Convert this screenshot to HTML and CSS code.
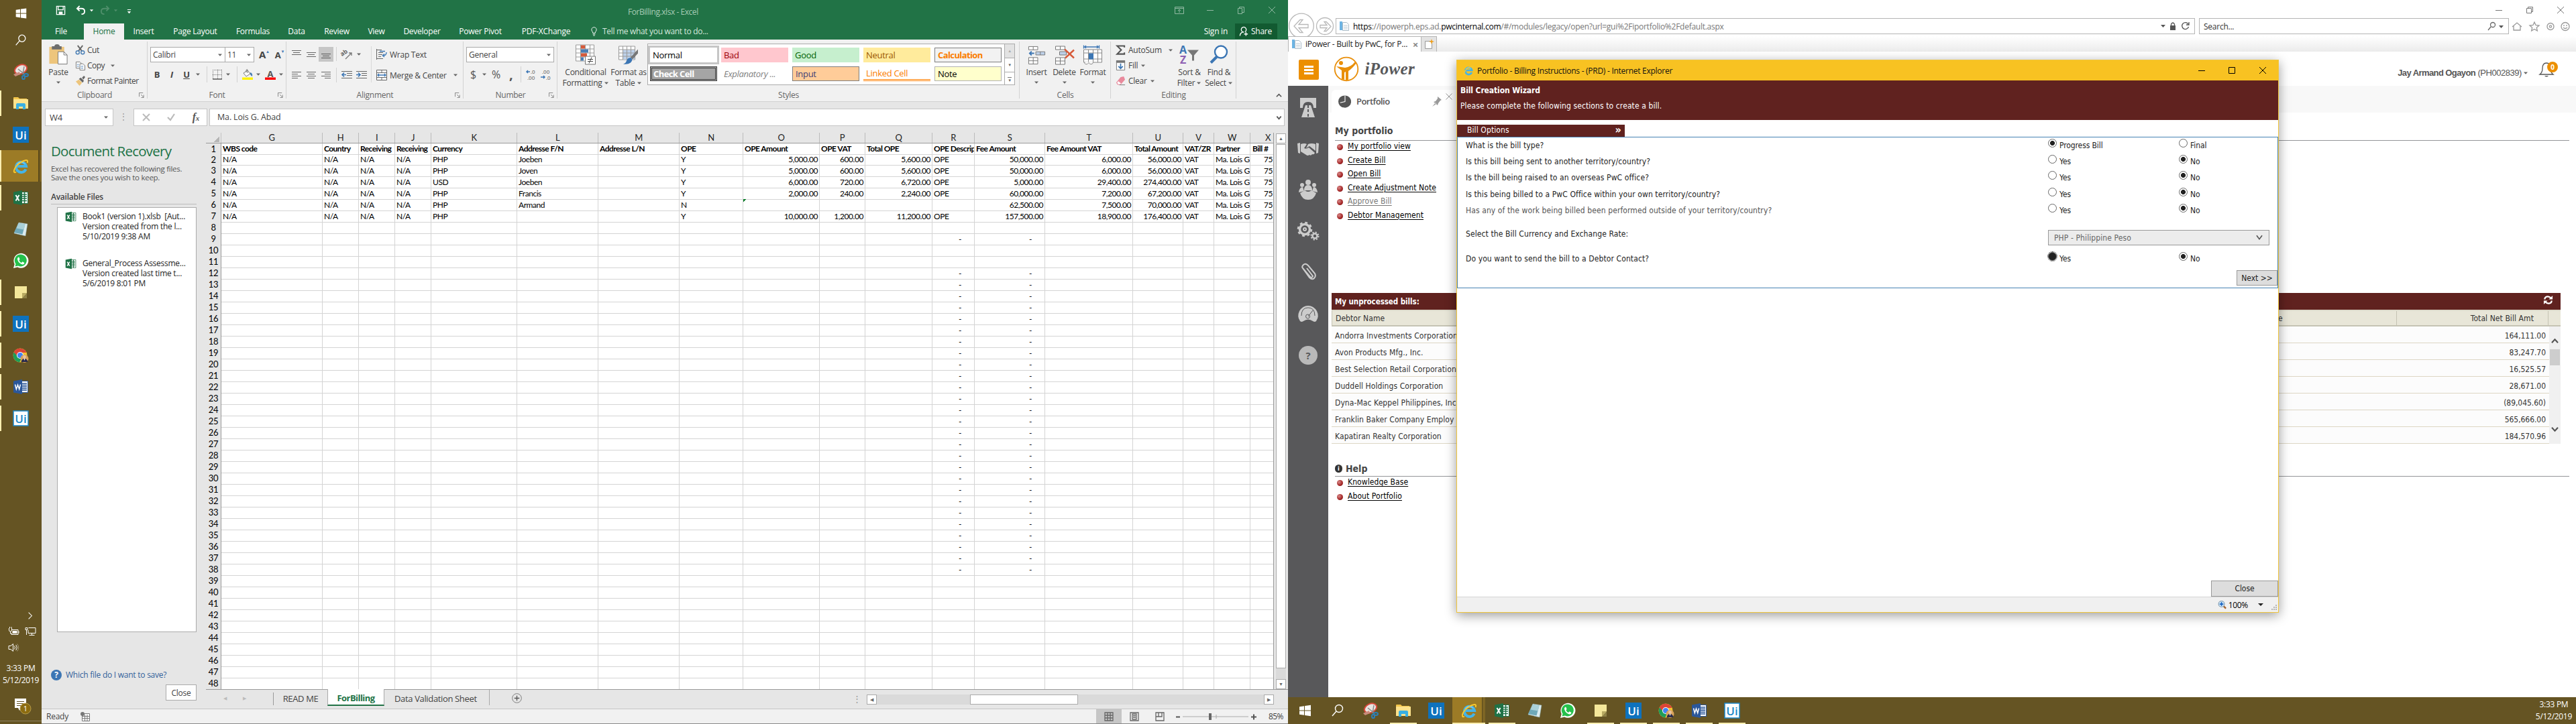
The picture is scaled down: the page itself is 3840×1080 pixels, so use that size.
FILE: index.html
```html
<!DOCTYPE html>
<html lang="en">
<head>
<meta charset="utf-8">
<title>Desktop</title>
<link rel="stylesheet" href="styles.css">
</head>
<body>
<svg class="defs" aria-hidden="true">
  <symbol id="win" viewBox="0 0 24 24"><path fill="#fff" d="M4 6.2l7-1v6.3H4zM12 5l9-1.300v7.800h-9zM4 12.500h7v6.300l-7-1zM12 12.500h9v7.800L12 19z"/></symbol>
  <symbol id="search" viewBox="0 0 24 24"><g fill="none" stroke="#fff" stroke-width="1.400"><circle cx="14" cy="9" r="5.500"/><path d="M10 13l-6 7"/></g></symbol>
  <symbol id="snip" viewBox="0 0 24 24"><ellipse cx="12" cy="8.500" rx="9.500" ry="6.500" fill="#e9e5e2" stroke="#d84a3c" stroke-width="2" transform="rotate(-25 12 8.500)"/><path d="M8 8l10 8M17 4l-2 12" stroke="#888" stroke-width="1.500"/><path d="M1 16l9-4 1 4-7 3z" fill="#c98b7c"/><g fill="none" stroke="#2d7fb8" stroke-width="2"><ellipse cx="20" cy="17" rx="3" ry="2"/><ellipse cx="16" cy="20.500" rx="2" ry="2.800"/></g></symbol>
  <symbol id="folder" viewBox="0 0 24 24"><path fill="#f3c64b" d="M1 4q0-1 1-1h6l2 2h11v4H1z"/><path fill="#fde38d" d="M1 6h22v14H1z"/><path fill="#3ab0e2" d="M5 14q0-2 2-2h10q2 0 2 2v7h-4v-4H9v4H5z"/></symbol>
  <symbol id="uib" viewBox="0 0 24 24"><rect width="24" height="24" fill="#0e72bd"/><text x="12" y="18.500" text-anchor="middle" class="glyph" font-size="17" font-weight="600" fill="#fff">Ui</text></symbol>
  <symbol id="uiw" viewBox="0 0 24 24"><rect x="1" y="1" width="22" height="22" fill="#fff" stroke="#1b87c9" stroke-width="1.500"/><text x="12" y="18.500" text-anchor="middle" class="glyph" font-size="17" font-weight="600" fill="#1b87c9">Ui</text></symbol>
  <symbol id="ie" viewBox="0 0 24 24"><path fill="none" stroke="#44b4e8" stroke-width="4" d="M19.500 16.500A7.600 7.600 0 1 1 20 12H6"/><path fill="none" stroke="#a5e0fa" stroke-width="1" d="M6.500 9A7 7 0 0 1 18 8.500"/><path fill="none" stroke="#f8c82e" stroke-width="2" d="M5 20.500C-1 24 2 13 10 7.500S24 1 21.500 7"/></symbol>
  <symbol id="excel" viewBox="0 0 24 24"><path fill="#fff" stroke="#1f7246" d="M12 3.500h10.500v17H12z"/><path stroke="#1f7246" stroke-width="1.500" d="M13 7h8M13 10h8M13 13h8M13 16.500h8M17.500 4v16"/><path fill="#1f7246" d="M1 3.500L14 1v22L1 20.500z"/><path d="M4.500 8l5 8.500M9.500 8l-5 8.500" stroke="#fff" stroke-width="2"/></symbol>
  <symbol id="word" viewBox="0 0 24 24"><path fill="#fff" stroke="#2b579a" d="M12 3.500h10.500v17H12z"/><path stroke="#2b579a" stroke-width="1.300" d="M13 7h8M13 9.500h8M13 12h8M13 14.500h8M13 17h8"/><path fill="#2b579a" d="M1 3.500L14 1v22L1 20.500z"/><path d="M3.500 8.500l1.800 7L7.500 9l2.200 6.500 1.800-7" fill="none" stroke="#fff" stroke-width="1.500"/></symbol>
  <symbol id="notepad" viewBox="0 0 24 24"><path fill="#dcecef" stroke="#8aa" stroke-width=".5" d="M9 2l13 2-3 18-17-4z"/><path fill="#6fa9b9" d="M8.500 3l10 1.500-4 15L2 17z"/><path fill="#a9d0d8" d="M8.500 3l10 1.500-2 8-11-2z"/></symbol>
  <symbol id="whatsapp" viewBox="0 0 24 24"><path fill="#fff" d="M1 23l1.700-6A11 11 0 1 1 7 21.400z"/><path fill="#25c04b" d="M3.500 20.500l1-3.800A9 9 0 1 1 8 19.600z"/><path fill="#fff" d="M8.500 6.500q-2 1-1.500 3.500 1.500 5.500 7 7.500 3 .5 3.500-2.500l-3-1.700-1.500 1.700q-2.500-1-3.700-3.700L10.500 10l-1-3z"/></symbol>
  <symbol id="note" viewBox="0 0 24 24"><path fill="#f4e79a" d="M3 3h18v10l-7 8H3z"/><path fill="#8d8045" d="M21 13v8h-7z"/><path fill="#b8aa62" d="M14 13h7l-7 8z"/></symbol>
  <symbol id="chrome" viewBox="0 0 24 24"><circle cx="11" cy="12" r="10.500" fill="#f3c22f"/><path fill="#dc4437" d="M1.500 7.500A10.500 10.500 0 0 1 20.500 8H11l-5 6z"/><path fill="#1f9d58" d="M1.600 7.500A10.500 10.500 0 0 0 10 22.400l4-7.400-6-1z"/><circle cx="11" cy="12" r="5" fill="#fff"/><circle cx="11" cy="12" r="4" fill="#4384f3"/><circle cx="17.500" cy="17" r="6" fill="#d9a35c"/><circle cx="17.500" cy="14.500" r="2.400" fill="#e8c39e"/><path fill="#2b2c4c" d="M12.500 22q1-5 5-5t5 5z"/><path fill="#fff" d="M16.500 17h2l-1 3z"/></symbol>
  <symbol id="dn" viewBox="0 0 8 8"><path fill="#666" d="M1 2.500h6L4 5.800z"/></symbol>
  <symbol id="launch" viewBox="0 0 9 9"><path fill="none" stroke="#777" d="M.5 7V.5H7M3.500 3.500l4 4M8 4v4.500H4"/></symbol>
  <symbol id="doc" viewBox="0 0 16 16"><path fill="#fff" stroke="#a9bac6" d="M5.500 2.500h6l3 3v9h-9z"/><path fill="#6db4e3" d="M1 1h4v13H1z"/><path stroke="#b9c8d2" d="M7 7h6M7 9.500h6M7 12h6"/></symbol>
</svg>

<div class="desktop">
  <!-- vertical taskbar -->
  <nav class="vbar">
    <span class="v s40"><svg><use href="#win"/></svg></span>
    <span class="v s40"><svg><use href="#search"/></svg></span>
    <span class="v first"><svg><use href="#snip"/></svg></span>
    <span class="v open"><svg><use href="#folder"/></svg></span>
    <span class="v"><svg><use href="#uib"/></svg></span>
    <span class="v open active"><svg><use href="#ie"/></svg></span>
    <span class="v open"><svg><use href="#excel"/></svg></span>
    <span class="v"><svg><use href="#notepad"/></svg></span>
    <span class="v"><svg><use href="#whatsapp"/></svg></span>
    <span class="v open"><svg><use href="#note"/></svg></span>
    <span class="v open"><svg><use href="#uib"/></svg></span>
    <span class="v open"><svg><use href="#chrome"/></svg></span>
    <span class="v open"><svg><use href="#word"/></svg></span>
    <span class="v open"><svg><use href="#uiw"/></svg></span>
    <div class="tray">
      <svg class="more" viewBox="0 0 10 14"><path d="M2 1l6 6-6 6" fill="none" stroke="#fff" stroke-width="1.300"/></svg>
      <div class="trayrow">
        <svg viewBox="0 0 16 16"><path fill="none" stroke="#fff" d="M4.500 5.500h10v7h-10v-2M1 3v3q0 2 2 2t2-2V3M2 1v2M4.500 1v2M3 8v3h2"/><path fill="#fff" d="M6 7h7v4H6zM15 7.500h1v3h-1z"/></svg>
        <svg viewBox="0 0 16 16"><path fill="none" stroke="#fff" d="M5 2.500h10.500v8H4.500V6M.5 2.500h3v3h-3zM2 5.500V13M10 10.500V13M6 13.500h8"/></svg>
      </div>
      <div class="trayrow"><svg viewBox="0 0 16 16"><path fill="none" stroke="#fff" d="M.5 5.500h3l3.500-3v11l-3.500-3h-3zM9 5.500q2 2.500 0 5M11 4q3.500 4 0 8"/><path fill="none" stroke="#a39a7c" d="M13 2.500q4.500 5.500 0 11"/></svg></div>
      <div class="clock">3:33 PM<br>5/12/2019</div>
      <svg class="notif" viewBox="0 0 28 28"><path fill="#fff" d="M2 2h17v14H12l-3 4-2-4H2z"/><path stroke="#655423" d="M5 6.500h11M5 9.500h11M5 12.500h8"/><circle cx="18" cy="17" r="8" fill="#8c6c10" stroke="#b59a4a"/><text x="18" y="21" text-anchor="middle" class="glyph" font-size="11" fill="#fff">1</text></svg>
    </div>
  </nav>

  <!-- spreadsheet window -->
  <section class="xl">
    <header class="xtitle">
      <div class="qat">
        <svg class="q1" viewBox="0 0 16 16"><path fill="none" stroke="#fff" stroke-width="1.400" d="M1.500 1.500h13v13h-13zM4 2v5h8V2"/><path fill="#fff" d="M5 10h6v5H5z"/></svg>
        <svg class="q2" viewBox="0 0 16 16"><path fill="none" stroke="#fff" stroke-width="2" d="M6 1L2 5l4 4M2 5h7q5 0 5 4.500T9 14"/></svg>
        <svg class="q3" viewBox="0 0 8 8"><path fill="#fff" d="M1 2.500h6L4 6z"/></svg>
        <svg class="q4" viewBox="0 0 16 16"><path fill="none" stroke="#4f8f6b" stroke-width="2" d="M10 1l4 4-4 4M14 5H7Q2 5 2 9.500T7 14"/></svg>
        <svg class="q5" viewBox="0 0 8 8"><path fill="#4f8f6b" d="M1 2.500h6L4 6z"/></svg>
        <svg class="q6" viewBox="0 0 8 8"><path fill="#fff" d="M1 0h6v1H1zM1 3.500h6L4 7z"/></svg>
      </div>
      <span class="xname">ForBilling.xlsx - Excel</span>
      <div class="xwin">
        <svg viewBox="0 0 14 14"><path fill="none" stroke="#90b9a2" d="M.5 2.500h13v10H.5zM.5 4.500h13M7 11V6M5 8l2-2 2 2"/></svg>
        <svg viewBox="0 0 14 14"><path stroke="#90b9a2" d="M2 7.500h10"/></svg>
        <svg viewBox="0 0 14 14"><path fill="none" stroke="#90b9a2" d="M2.500 4.500h6v8h-6zM4.500 4.500v-2h7v8h-3"/></svg>
        <svg viewBox="0 0 14 14"><path stroke="#90b9a2" d="M2 2l10 10M12 2L2 12"/></svg>
      </div>
    </header>
    <div class="xtabs">
      <span class="t-file">File</span><span class="t-home">Home</span><span class="t-ins">Insert</span><span class="t-page">Page Layout</span><span class="t-form">Formulas</span><span class="t-data">Data</span><span class="t-rev">Review</span><span class="t-view">View</span><span class="t-dev">Developer</span><span class="t-pow">Power Pivot</span><span class="t-pdf">PDF-XChange</span>
      <svg class="bulb" viewBox="0 0 12 16"><path fill="none" stroke="#fff" d="M4 11Q4 9 2.500 7.500A4 4 0 1 1 9.500 7.500Q8 9 8 11zM4 13h4M4.500 15h3"/></svg>
      <span class="tell">Tell me what you want to do...</span>
      <span class="signin">Sign in</span>
      <span class="share"><svg viewBox="0 0 16 16"><path fill="none" stroke="#fff" stroke-width="1.400" d="M8 9a4 4 0 1 1 1.500-.5M1.500 15q0-4.500 4.500-6M11 9v6M8 12h6"/></svg>Share</span>
    </div>

    <div class="ribbon">
      <div class="grp g-clip">
        <div class="gbody">
          <div class="big paste"><svg viewBox="0 0 30 32"><path fill="#edc57c" d="M1 4h23v26H1z"/><path fill="#6d6d6d" d="M5 3h4q0-3 4-3t4 3h3v5H5z"/><path fill="#fff" stroke="#777" d="M14.500 11.500h9l5 5v14h-14z"/><path fill="none" stroke="#777" d="M23.500 11.500v5h5"/></svg><span>Paste</span><svg class="dn"><use href="#dn"/></svg></div>
          <div class="stack clipstack">
            <div><svg viewBox="0 0 16 16"><path stroke="#666" stroke-width="2" d="M4 1l7 9M12 1L5 10"/><g fill="none" stroke="#4a7fb5" stroke-width="1.500"><circle cx="4" cy="12" r="2.700"/><circle cx="12" cy="12" r="2.700"/></g></svg>Cut</div>
            <div><svg viewBox="0 0 16 16"><path fill="#fff" stroke="#777" d="M1.500 2.500h6l2 2v8h-8z"/><path fill="#fff" stroke="#777" d="M7.500 5.500h5l3 3v7h-8z"/><path stroke="#4a7fb5" d="M3 6.500h3M3 9.500h3M9 9.500h4M9 12.500h4"/></svg>Copy<svg class="dn"><use href="#dn"/></svg></div>
            <div><svg viewBox="0 0 16 16"><path fill="#edc57c" d="M1 9l5-3 5 5-4 5z"/><path fill="#666" d="M6 5l3-2 5 5-2 3zM11 3l3-3 2 2-3 4z"/></svg>Format Painter</div>
          </div>
        </div>
        <div class="glabel">Clipboard<svg><use href="#launch"/></svg></div>
      </div>
      <div class="grp g-font">
        <div class="r1">
          <span class="combo c111">Calibri<svg class="dn"><use href="#dn"/></svg></span><span class="combo c43">11<svg class="dn"><use href="#dn"/></svg></span>
          <b class="grow">A<sup>▲</sup></b><b class="shrink">A<sup>▼</sup></b>
        </div>
        <div class="r2">
          <b class="w22">B</b><b class="w22 it">I</b><b class="w22 un">U</b><svg class="dn"><use href="#dn"/></svg><i class="vs"></i>
          <svg class="i16" viewBox="0 0 16 16"><path stroke="#777" stroke-dasharray="1 1" d="M1 1.500h14M1 8.500h14M1.500 1v14M8.500 1v14M14.500 1v14"/><path stroke="#555" d="M1 15h14" stroke-width="1.500"/></svg><svg class="dn"><use href="#dn"/></svg><i class="vs"></i>
          <svg class="i16" viewBox="0 0 16 16"><path fill="#fff" stroke="#777" d="M2 6l6-4 4 5-6 4z"/><path fill="none" stroke="#777" d="M6 5V1.500q2-2 2 0V6"/><path fill="#4a7fb5" d="M12 5q4 1 3 6-2-1-3-3z"/><path fill="#fff200" d="M0 12.500h16V16H0z"/></svg><svg class="dn"><use href="#dn"/></svg>
          <svg class="i16" viewBox="0 0 16 16"><text x="8" y="11.500" text-anchor="middle" class="glyph" font-weight="700" font-size="13" fill="#555">A</text><path fill="#f00" d="M0 12.500h16V16H0z"/></svg><svg class="dn"><use href="#dn"/></svg>
        </div>
        <div class="glabel">Font<svg><use href="#launch"/></svg></div>
      </div>
      <div class="grp g-align">
        <div class="acols">
          <div class="agrid">
            <svg class="al" viewBox="0 0 14 14"><path stroke="#666" d="M0 1.500h14M2 4.500h10M0 7.500h14"/></svg>
            <svg class="al" viewBox="0 0 14 14"><path stroke="#666" d="M0 4.500h14M2 7.500h10M0 10.500h14"/></svg>
            <span class="on"><svg class="al" viewBox="0 0 14 14"><path stroke="#555" d="M0 6.500h14M2 9.500h10M0 12.500h14"/></svg></span>
            <svg class="al" viewBox="0 0 14 14"><path stroke="#666" d="M0 2.500h14M0 5.500h9M0 8.500h14M0 11.500h9"/></svg>
            <svg class="al" viewBox="0 0 14 14"><path stroke="#666" d="M0 2.500h14M2 5.500h10M0 8.500h14M2 11.500h10"/></svg>
            <svg class="al" viewBox="0 0 14 14"><path stroke="#666" d="M0 2.500h14M5 5.500h9M0 8.500h14M5 11.500h9"/></svg>
          </div>
          <i class="vs2"></i>
          <div class="ogrid">
            <svg class="i16" viewBox="0 0 16 16"><text x="0" y="9" class="glyph" font-size="9" font-weight="700" fill="#666" transform="rotate(-35 4 9)">ab</text><path stroke="#777" fill="none" stroke-width="1.300" d="M6 15l9-9M11 6h4v4"/></svg><svg class="dn"><use href="#dn"/></svg>
            <svg class="i16" viewBox="0 0 16 16"><path stroke="#666" d="M0 2.500h16M8 5.500h8M8 8.500h8M0 12.500h16"/><path stroke="#3c76b4" stroke-width="1.600" fill="none" d="M7 7.500H1M4 4.500l-3 3 3 3"/></svg>
            <svg class="i16" viewBox="0 0 16 16"><path stroke="#666" d="M0 2.500h16M8 5.500h8M8 8.500h8M0 12.500h16"/><path stroke="#3c76b4" stroke-width="1.600" fill="none" d="M0 7.500h6M3 4.500l3 3-3 3"/></svg>
          </div>
          <i class="vs3"></i>
          <div class="wstack">
            <div><svg class="i16" viewBox="0 0 16 16"><path stroke="#666" d="M.5 0v16M0 1.500h8M3 5.500h7M3 8.500h6M3 11.500h4M0 14.500h10"/><path fill="none" stroke="#3c76b4" stroke-width="1.400" d="M5 3.500h8M15 5q0 5-5 5M12 7.500L9.500 10l2.500 2"/></svg>Wrap Text</div>
            <div><svg class="i16" viewBox="0 0 16 16"><path fill="#fff" stroke="#666" d="M.5 .5h15v15H.5zM.5 4.500h15M.5 11.500h15M8 .5v4M8 11.500v4"/><path stroke="#3c76b4" stroke-width="1.300" fill="none" d="M2 8h12M4 6L2 8l2 2M12 6l2 2-2 2"/></svg>Merge &amp; Center<svg class="dn"><use href="#dn"/></svg></div>
          </div>
        </div>
        <div class="glabel">Alignment<svg><use href="#launch"/></svg></div>
      </div>
      <div class="grp g-num">
        <div class="r1"><span class="combo c130">General<svg class="dn"><use href="#dn"/></svg></span></div>
        <div class="r2 num"><span class="money">$</span><svg class="dn"><use href="#dn"/></svg><span class="pct">%</span><b class="com">,</b><i class="vs"></i>
          <svg class="i16" viewBox="0 0 16 16"><text x="7" y="7" class="glyph" font-size="8" fill="#555">.0</text><text x="2" y="15.500" class="glyph" font-size="8" fill="#555">.00</text><path fill="none" stroke="#3c76b4" stroke-width="1.500" d="M6 4H1M3 2L1 4l2 2"/></svg>
          <svg class="i16" viewBox="0 0 16 16"><text x="2" y="7" class="glyph" font-size="8" fill="#555">.00</text><text x="8" y="15.500" class="glyph" font-size="8" fill="#555">.0</text><path fill="none" stroke="#3c76b4" stroke-width="1.500" d="M0 12h6M4 10l2 2-2 2"/></svg>
        </div>
        <div class="glabel">Number<svg><use href="#launch"/></svg></div>
      </div>
      <div class="grp g-style">
        <div class="gbody">
          <div class="big cf"><svg viewBox="0 0 30 30"><path fill="#fff" stroke="#999" d="M.5 .5h27v24H.5zM.5 6.500h27M.5 12.500h27M.5 18.500h27M7.500 .5v24M14.500 .5v24M21.500 .5v24"/><path fill="#d65a3a" d="M8 1h6v5H8zM8 13h9v5H8z"/><path fill="#4a7fb5" d="M8 7h11v5H8zM8 19h4v5H8z"/><path fill="#fff" stroke="#777" d="M14.500 17.500h15v12h-15z"/><path stroke="#444" d="M18 22h8M18 25h8M24 19l-4 9"/></svg><span>Conditional<br>Formatting<svg class="dn"><use href="#dn"/></svg></span></div>
          <div class="big ft"><svg viewBox="0 0 30 30"><path fill="#fff" stroke="#999" d="M.5 2.500h24v20H.5z"/><path fill="#bdd0e9" d="M7 8h17v14H7z"/><path stroke="#999" d="M.5 7.500h24M.5 12.500h24M.5 17.500h24M6.500 2.500v20M12.500 2.500v20M18.500 2.500v20"/><path fill="#777" d="M29 7v6l-8 9-3-3z"/><path fill="#3c76b4" d="M19 20q3 3-1 7-4 3-11 2 4-1 5-5 2-5 7-4z"/></svg><span>Format as<br>Table<svg class="dn"><use href="#dn"/></svg></span></div>
          <div class="gallery">
            <div class="cells">
              <span class="cs normal">Normal</span><span class="cs bad">Bad</span><span class="cs good">Good</span><span class="cs neutral">Neutral</span><span class="cs calc">Calculation</span>
              <span class="cs check">Check Cell</span><span class="cs expl">Explanatory ...</span><span class="cs input">Input</span><span class="cs linked">Linked Cell</span><span class="cs noted">Note</span>
            </div>
            <div class="gbar"><span class="dim">▲</span><span>▼</span><span class="last">▼</span></div>
          </div>
        </div>
        <div class="glabel">Styles</div>
      </div>
      <div class="grp g-cells">
        <div class="gbody">
          <div class="big c1"><svg viewBox="0 0 28 30"><path fill="#fff" stroke="#777" d="M1.500 2.500h14v5h-14zM8.500 2.500v5M1.500 19.500h14v10h-14zM8.500 19.500v10M1.500 24.500h14"/><path fill="#bdd0e9" stroke="#777" d="M12.500 10.500h14v5h-14zM19.500 10.500v5"/><path fill="none" stroke="#3c76b4" stroke-width="2" d="M10 13H3M6 10l-3 3 3 3"/></svg><span>Insert</span><svg class="dn"><use href="#dn"/></svg></div>
          <div class="big c2"><svg viewBox="0 0 30 30"><path fill="#fff" stroke="#777" d="M1.500 2.500h14v5h-14zM8.500 2.500v5M1.500 19.500h14v10h-14zM8.500 19.500v10M1.500 24.500h14"/><path fill="#bdd0e9" stroke="#777" d="M7.500 10.500h10v5h-10z"/><path stroke="#d65a3a" stroke-width="2.400" d="M15 7l14 13M29 8L16 20"/></svg><span>Delete</span><svg class="dn"><use href="#dn"/></svg></div>
          <div class="big c3"><svg viewBox="0 0 28 30"><path fill="#fff" stroke="#888" d="M.5 7.500h27v19H.5zM.5 12.500h27M.5 21.500h27M7.500 7.500v19M14.500 7.500v19M21.500 7.500v19"/><path fill="#3c76b4" d="M8 13h7v9H8z"/><path stroke="#3c76b4" fill="none" stroke-width="1.300" d="M1 3.500h22M.5 1v5M23.500 1v5M4 1.500l-2 2 2 2M20 1.500l2 2-2 2"/><path fill="#fff" stroke="#888" d="M2 26q-1 4 4 3l2-2q1 3 5 2l2-3"/></svg><span>Format</span><svg class="dn"><use href="#dn"/></svg></div>
        </div>
        <div class="glabel">Cells</div>
      </div>
      <div class="grp g-edit">
        <div class="gbody">
          <div class="stack">
            <div><svg viewBox="0 0 16 16"><path fill="none" stroke="#555" stroke-width="2.200" d="M14 4V1.500H2.500L9 8l-6.500 6.500H14V12"/></svg>AutoSum<svg class="dn far"><use href="#dn"/></svg></div>
            <div><svg viewBox="0 0 16 16"><path fill="#fff" stroke="#777" d="M1.500 .5h13v15h-13z"/><path fill="#777" d="M1 0h14v4H1z"/><path fill="none" stroke="#3c76b4" stroke-width="1.800" d="M8 5v8M4.500 9.500L8 13l3.500-3.500"/></svg>Fill<svg class="dn"><use href="#dn"/></svg></div>
            <div><svg viewBox="0 0 16 16"><path fill="#e98a9c" d="M8 2l5-1 2 5-7 8H3l-2-3z"/><path fill="#fff" stroke="#e98a9c" d="M4 8l5 4-2 2H4l-2-3z"/><path stroke="#777" d="M6 14.500h9"/></svg>Clear<svg class="dn"><use href="#dn"/></svg></div>
          </div>
          <div class="big e1"><svg viewBox="0 0 30 30"><text x="0" y="13" class="glyph" font-size="16" font-weight="700" fill="#3c76b4">A</text><text x="1" y="28" class="glyph" font-size="16" font-weight="700" fill="#8d5fb2">Z</text><path fill="#777" d="M12 8h17l-7 8v8h-3v-8z"/></svg><span>Sort &amp;<br>Filter<svg class="dn"><use href="#dn"/></svg></span></div>
          <div class="big e2"><svg viewBox="0 0 30 30"><circle cx="18" cy="11" r="9" fill="#fff" stroke="#3c76b4" stroke-width="2.400"/><path stroke="#3c76b4" stroke-width="4" d="M12 18l-9 9"/></svg><span>Find &amp;<br>Select<svg class="dn"><use href="#dn"/></svg></span></div>
        </div>
        <div class="glabel">Editing</div>
      </div>
      <svg class="collapse" viewBox="0 0 10 10"><path fill="none" stroke="#555" stroke-width="1.800" d="M1 7l4-4 4 4"/></svg>
    </div>

    <div class="fbar">
      <span class="namebox">W4<svg class="dn"><use href="#dn"/></svg></span>
      <span class="dots">⋮</span>
      <span class="fxbox"><svg viewBox="0 0 12 12"><path stroke="#bbb" stroke-width="2" d="M1 1l10 10M11 1L1 11"/></svg><svg viewBox="0 0 12 12"><path stroke="#bbb" fill="none" stroke-width="2.200" d="M1 6l4 4 6-9"/></svg><em>f<small>x</small></em></span>
      <span class="finput">Ma. Lois G. Abad<svg viewBox="0 0 10 10"><path fill="none" stroke="#555" stroke-width="2" d="M1.500 3L5 7l3.500-4"/></svg></span>
    </div>

    <div class="xbody">
      <aside class="pane">
        <h2>Document Recovery</h2>
        <p>Excel has recovered the following files.<br>Save the ones you wish to keep.</p>
        <h3>Available Files</h3>
        <div class="files">
          <div class="file"><svg><use href="#excel"/></svg><div>Book1 (version 1).xlsb&nbsp; [Aut...<br>Version created from the l...<br>5/10/2019 9:38 AM</div></div>
          <div class="file"><svg><use href="#excel"/></svg><div>General_Process Assessme...<br>Version created last time t...<br>5/6/2019 8:01 PM</div></div>
        </div>
        <div class="which"><span class="qm">?</span>Which file do I want to save?</div>
        <button class="pclose">Close</button>
      </aside>
      <div class="sheetcol">
        <div class="sheetrow">
          <div class="sheet" id="sheet"></div>
          <div class="vscroll"><span class="sb">▲</span><span class="vthumb"></span><span class="vtrack"></span><span class="sb">▼</span></div>
        </div>
        <div class="stabs">
          <span class="nav">◀</span><span class="nav n2">▶</span>
          <span class="stab readme">READ ME</span><span class="stab current">ForBilling</span><span class="stab dvs">Data Validation Sheet</span>
          <svg class="plus" viewBox="0 0 16 16"><circle cx="8" cy="8" r="7.300" fill="none" stroke="#777"/><path stroke="#555" stroke-width="1.400" d="M8 4v8M4 8h8"/></svg>
          <span class="dots hd">⋮</span>
          <div class="hscroll"><span class="sb">◀</span><span class="hthumb"></span><span class="sb">▶</span></div>
        </div>
      </div>
    </div>
    <footer class="status">
      <span>Ready</span>
      <svg class="rec" viewBox="0 0 14 14"><path fill="#fff" stroke="#777" d="M2.500 2.500h11v11h-11z"/><path stroke="#777" d="M3 6.500h10M3 9.500h10M6.500 4v9M10 4v9"/><circle cx="3" cy="3" r="3" fill="#777"/></svg>
      <span class="vw on"><svg viewBox="0 0 14 14"><path fill="none" stroke="#666" stroke-width="1.300" d="M1 1h12v12H1zM1 5h12M1 9h12M5 1v12M9 1v12"/></svg></span>
      <span class="vw"><svg viewBox="0 0 14 14"><path fill="none" stroke="#666" stroke-width="1.300" d="M1 1h12v12H1zM4 3h6v8H4zM5 5.500h4M5 8h4"/></svg></span>
      <span class="vw"><svg viewBox="0 0 14 14"><path fill="none" stroke="#666" stroke-width="1.300" d="M1 1h12v12H1zM5 1v6h5V1M1 7h9"/></svg></span>
      <svg class="slider" viewBox="0 0 124 14"><path stroke="#555" stroke-width="2" d="M0 7.500h6M112 7.500h8M116 3.500v8"/><path stroke="#aaa" d="M10 7h98M60 4v6"/><path fill="#666" d="M49 2h4v10h-4z"/></svg>
      <span class="zoomv">85%</span>
    </footer>
  </section>

  <!-- browser desktop -->
  <section class="right">
    <div class="iebar">
      <svg class="back" viewBox="0 0 70 36"><g fill="none" stroke="#b8b8b8" stroke-width="1.300"><circle cx="20" cy="19.500" r="18.300"/><circle cx="55" cy="20" r="12.500"/><path d="M18 10.500h4l-6 7h14v5H16l6 7h-4L9 20zM57 13.500h-3l4 5h-10v4h10l-4 5h3l7-7z"/></g></svg>
      <div class="addr"><svg><use href="#doc"/></svg><span class="url"><b>https</b>://ipowerph.eps.ad.<b>pwcinternal.com</b>/#/modules/legacy/open?url=gui%2Fiportfolio%2Fdefault.aspx</span>
        <svg class="aic" viewBox="0 0 46 14"><path fill="#555" d="M0 5h7L3.500 9zM14 6h8v7h-8z"/><path fill="none" stroke="#555" stroke-width="1.300" d="M15.500 6V4q2.500-4 5 0v2M41 4a5 5 0 1 0 .5 4M42 1v4h-4"/></svg></div>
      <div class="srch">Search...<svg viewBox="0 0 26 14"><g fill="none" stroke="#666" stroke-width="1.300"><circle cx="9" cy="5" r="3.500"/><path d="M6 8l-4 5"/></g><path fill="#555" d="M18 6h7l-3.500 4z"/></svg></div>
      <div class="iectl">
        <svg class="wc" viewBox="0 0 120 12"><path fill="none" stroke="#777" d="M0 6.500h10M46.500 3.500h7v7h-7zM48.500 3.500v-2h7v7h-2M92 1l10 10M102 1L92 11"/></svg>
        <svg class="tools" viewBox="0 0 88 16"><g fill="none" stroke="#999" stroke-width="1.300"><path d="M1 9l7-6 7 6M3 8v6h10V8"/><path d="M34 2l2 4.500 5 .500-3.700 3.200 1 4.800-4.300-2.500-4.300 2.500 1-4.800L27 7l5-.5z"/><circle cx="58" cy="8.500" r="5"/><circle cx="58" cy="8.500" r="1.600"/><circle cx="80" cy="8.500" r="6"/><path d="M77 10q3 3 6 0M78 6v2M82 6v2"/></g></svg>
      </div>
    </div>
    <div class="ietabs">
      <span class="ietab"><svg><use href="#doc"/></svg>iPower - Built by PwC, for P...<b>×</b></span>
      <span class="newtab"><svg viewBox="0 0 16 16"><path fill="#fff" stroke="#999" d="M2.500 3.500h10v11h-10z"/><path fill="#f0a01c" d="M12 0l1 3 3 1-3 1-1 3-1-3-3-1 3-1z"/></svg></span>
    </div>
    <div class="ihead">
      <span class="burger"><i></i><i></i><i></i></span>
      <svg class="logo" viewBox="0 0 38 38"><circle cx="19" cy="19" r="17.300" fill="#fff" stroke="#e98f0a" stroke-width="1.800"/><circle cx="11" cy="10" r="3" fill="#e98f0a"/><path fill="#e98f0a" d="M4 15q8 1 13 2 9-1 15-9l2 2q-6 8-12 12v13q-2 1-4 1V23l-2 1v11l-4-1V21z"/></svg>
      <span class="brand">iPower</span>
      <span class="user"><b>Jay Armand Ogayon</b> (PH002839)<svg class="dn"><use href="#dn"/></svg></span>
      <svg class="bell" viewBox="0 0 30 26"><path fill="none" stroke="#555" stroke-width="1.300" d="M1 20q4-3 4-9 0-8 6-8t6 8q0 6 4 9z"/><path fill="#555" d="M8 22h6q-3 3-6 0z"/><ellipse cx="20" cy="9" rx="8" ry="8" fill="#ec8f00"/><text x="20" y="13" text-anchor="middle" class="glyph" font-size="10" font-weight="700" fill="#fff">0</text></svg>
    </div>
    <div class="imain">
      <nav class="side">
        <svg viewBox="0 0 32 32"><path fill="#ccc" d="M4 2h24v15h-4q0-9-8-9t-8 9H4z"/><path fill="#ccc" d="M12 13h8l6 18H6z"/><path stroke="#58585a" stroke-width="2" d="M16 13v4M16 19v4M16 26v4"/></svg>
        <svg viewBox="0 0 32 32"><path fill="#ccc" d="M0 8l4-1v16l-3-1zM28 7l4 1-1 14-3 1zM5 9q6-2 9 0l-4 6q3 2 7-1l9 8q-1 3-4 2-2 3-4 1-3 2-5 0l-8-5zM16 9q5-2 11 0v10l-9-7-5 3q2-4 3-6z"/></svg>
        <svg viewBox="0 0 32 32"><g fill="#ccc"><circle cx="16" cy="5" r="4"/><circle cx="7" cy="9" r="3"/><circle cx="25" cy="9" r="3"/><path d="M10 17q0-8 6-8t6 8zM2 20q1-8 6-8l2 6zM30 20q-1-8-6-8l-2 6z"/><path d="M4 21l7-4q5 4 10 0l7 4q-3 10-12 10T4 21z"/></g></svg>
        <svg viewBox="0 0 32 32"><g fill="none" stroke="#ccc"><circle cx="11" cy="13" r="7.500" stroke-width="3.500"/><circle cx="11" cy="13" r="10" stroke-width="2.500" stroke-dasharray="3.900 3.950"/><circle cx="11" cy="13" r="2" stroke-width="2"/><circle cx="26" cy="23" r="3.500" stroke-width="2.500"/><circle cx="26" cy="23" r="5.500" stroke-width="2" stroke-dasharray="2.160 2.160"/></g></svg>
        <svg viewBox="0 0 32 32"><path fill="none" stroke="#ccc" stroke-width="2" d="M8 10l10 14q4 4 7 1t1-7L16 6q-4-4-7-1t-1 5l11 13q3 2 4-1l-9-12"/></svg>
        <svg viewBox="0 0 32 32"><path fill="#ccc" d="M4 27Q-1 20 3 12 8 4 16 4t13 8q4 8-1 15-2 2-5 0-7-5-14 0-3 2-5 0z"/><path fill="none" stroke="#58585a" d="M6 19q0-12 10-12t10 12M16 20l7-9"/><circle cx="15.500" cy="20" r="3" fill="none" stroke="#58585a"/></svg>
        <svg viewBox="0 0 32 32"><circle cx="16" cy="16" r="14" fill="#b9b9b9"/><text x="16" y="21.500" text-anchor="middle" class="glyph" font-weight="700" font-size="15" fill="#58585a">?</text></svg>
      </nav>
      <div class="content">
        <div class="band"><div class="ptab"><svg class="pie" viewBox="0 0 22 20"><path fill="#555" d="M10 0A10 10 0 1 0 10 20 10 10 0 0 0 12 0z"/><path stroke="#fff" fill="none" stroke-width="1.200" d="M11 0v10l-8 2"/></svg>Portfolio<svg class="pin" viewBox="0 0 16 16"><path fill="#999" d="M9 1l6 5-2 1-3 4-1 3-6-5 3-1 3-4zM6 10l-5 6 6-4z"/></svg><svg class="px" viewBox="0 0 10 10"><path stroke="#999" d="M.5 .5l9 9M9.500 .5l-9 9"/></svg></div></div>
        <h4 class="myp">My portfolio</h4>
        <ul class="links l1"><li>My portfolio view</li><li>Create Bill</li><li>Open Bill</li><li>Create Adjustment Note</li><li class="off">Approve Bill</li><li>Debtor Management</li></ul>
        <div class="bills">
          <div class="btitle">My unprocessed bills:<svg viewBox="0 0 16 16"><path fill="none" stroke="#fff" stroke-width="2.400" d="M2.500 7q0-4 4.500-4.500 3-.3 5.500 2.500M13.500 9q0 4-4.500 4.500-3 .3-5.500-2.500"/><path fill="#fff" d="M15 1v6H9zM1 15V9h6z"/></svg></div>
          <div class="bhead"><span>Debtor Name</span><em>e</em><b>Total Net Bill Amt</b></div>
          <div class="bwrap">
            <div class="brows">
              <div><span>Andorra Investments Corporation</span><span>164,111.00</span></div>
              <div><span>Avon Products Mfg., Inc.</span><span>83,247.70</span></div>
              <div><span>Best Selection Retail Corporation</span><span>16,525.57</span></div>
              <div><span>Duddell Holdings Corporation</span><span>28,671.00</span></div>
              <div><span>Dyna-Mac Keppel Philippines, Inc.</span><span>(89,045.60)</span></div>
              <div><span>Franklin Baker Company Employ</span><span>565,666.00</span></div>
              <div><span>Kapatiran Realty Corporation</span><span>184,570.96</span></div>
            </div>
            <div class="bscroll"><svg viewBox="0 0 12 10"><path fill="none" stroke="#555" stroke-width="2.400" d="M1 8l5-5.500L11 8"/></svg><i></i><svg viewBox="0 0 12 10"><path fill="none" stroke="#555" stroke-width="2.400" d="M1 2l5 5.500L11 2"/></svg></div>
          </div>
        </div>
        <h4 class="help"><span class="inf">i</span>Help</h4>
        <ul class="links l2"><li>Knowledge Base</li><li>About Portfolio</li></ul>
      </div>
    </div>
    <nav class="hbar">
      <span class="h"><svg><use href="#win"/></svg></span>
      <span class="h"><svg><use href="#search"/></svg></span>
      <span class="h"><svg><use href="#snip"/></svg></span>
      <span class="h open"><svg><use href="#folder"/></svg></span>
      <span class="h"><svg><use href="#uib"/></svg></span>
      <span class="h open active"><svg><use href="#ie"/></svg></span>
      <span class="h open"><svg><use href="#excel"/></svg></span>
      <span class="h"><svg><use href="#notepad"/></svg></span>
      <span class="h"><svg><use href="#whatsapp"/></svg></span>
      <span class="h open"><svg><use href="#note"/></svg></span>
      <span class="h open"><svg><use href="#uib"/></svg></span>
      <span class="h open"><svg><use href="#chrome"/></svg></span>
      <span class="h open"><svg><use href="#word"/></svg></span>
      <span class="h open"><svg><use href="#uiw"/></svg></span>
      <div class="clock hclock">3:33 PM<br>5/12/2019</div>
    </nav>

    <!-- popup window -->
    <div class="dialog">
      <div class="dtitle"><svg class="die"><use href="#ie"/></svg><span>Portfolio - Billing Instructions - (PRD) - Internet Explorer</span>
        <svg class="dctl" viewBox="0 0 104 12"><path fill="none" stroke="#000" d="M1 6.500h10M46.500 1.500h9v9h-9zM92 1l10 10M102 1L92 11"/></svg></div>
      <div class="dhead"><b>Bill Creation Wizard</b><span>Please complete the following sections to create a bill.</span></div>
      <div class="dopt">Bill Options<b>»</b></div>
      <div class="dbox">
        <div class="q h23"><span>What is the bill type?</span><label><i class="on"></i>Progress Bill</label><label><i></i>Final</label></div>
        <div class="q h24"><span>Is this bill being sent to another territory/country?</span><label><i></i>Yes</label><label><i class="on"></i>No</label></div>
        <div class="q h25"><span>Is the bill being raised to an overseas PwC office?</span><label><i></i>Yes</label><label><i class="on"></i>No</label></div>
        <div class="q h25b"><span>Is this being billed to a PwC Office within your own territory/country?</span><label><i></i>Yes</label><label><i class="on"></i>No</label></div>
        <div class="q h26"><span class="soft">Has any of the work being billed been performed outside of your territory/country?</span><label><i></i>Yes</label><label><i class="on"></i>No</label></div>
        <div class="q sel"><span>Select the Bill Currency and Exchange Rate:</span><div class="select">PHP - Philippine Peso<svg viewBox="0 0 12 10"><path fill="none" stroke="#555" stroke-width="1.800" d="M1.500 1.500L6 7.500l4.500-6"/></svg></div></div>
        <div class="q last"><span>Do you want to send the bill to a Debtor Contact?</span><label><i class="full"></i>Yes</label><label><i class="on"></i>No</label></div>
        <button class="next">Next &gt;&gt;</button>
      </div>
      <div class="dspace"><button class="dclose">Close</button></div>
      <div class="dstat"><svg class="mag" viewBox="0 0 14 14"><path stroke="#a5632c" stroke-width="2.500" d="M8 8l5 5"/><circle cx="6" cy="6" r="4.700" fill="#d7ecfa" stroke="#8aa5bb" stroke-width="1.400"/><path stroke="#1561c0" stroke-width="2" d="M6 3v6M3 6h6"/></svg>100%<svg class="zdn" viewBox="0 0 8 8"><path fill="#222" d="M0 2h8L4 6z"/></svg><svg class="grip" viewBox="0 0 9 9"><path fill="#b5b5b5" d="M6 0h2v2H6zM3 3h2v2H3zM6 3h2v2H6zM0 6h2v2H0zM3 6h2v2H3zM6 6h2v2H6z"/></svg></div>
    </div>
  </section>
</div>
<script src="sheet.js"></script>
</body>
</html>
```

FILE: sheet.js
```js
const columns = "GHIJKLMNOPQRSTUVWX".split("");
const numeric = new Set(["O", "P", "Q", "S", "T", "U", "X"]);

const headings = ["WBS code", "Country", "Receiving", "Receiving", "Currency", "Addresse F/N", "Addresse L/N", "OPE",
  "OPE Amount", "OPE VAT", "Total OPE", "OPE Descrip", "Fee Amount", "Fee Amount VAT", "Total Amount", "VAT/ZR", "Partner", "Bill #"];

const record = (currency, name, ope, amount, vat, total, desc, fee, feeVat, grand) =>
  ["N/A", "N/A", "N/A", "N/A", currency, name, "", ope, amount, vat, total, desc, fee, feeVat, grand, "VAT", "Ma. Lois G", "75"];

const records = [
  record("PHP", "Joeben", "Y", "5,000.00", "600.00", "5,600.00", "OPE", "50,000.00", "6,000.00", "56,000.00"),
  record("PHP", "Joven", "Y", "5,000.00", "600.00", "5,600.00", "OPE", "50,000.00", "6,000.00", "56,000.00"),
  record("USD", "Joeben", "Y", "6,000.00", "720.00", "6,720.00", "OPE", "5,000.00", "29,400.00", "274,400.00"),
  record("PHP", "Francis", "Y", "2,000.00", "240.00", "2,240.00", "OPE", "60,000.00", "7,200.00", "67,200.00"),
  record("PHP", "Armand", "N", "", "", "", "", "62,500.00", "7,500.00", "70,000.00"),
  record("PHP", "", "Y", "10,000.00", "1,200.00", "11,200.00", "OPE", "157,500.00", "18,900.00", "176,400.00"),
];

const hasDashes = (row) => row === 9 || (row >= 12 && row <= 38);

const sheet = document.getElementById("sheet");

function addRow(className, label, cells) {
  const row = document.createElement("div");
  row.className = "srow " + className;
  const head = document.createElement("span");
  head.className = "rh";
  head.textContent = label;
  row.append(head);
  cells.forEach((cell) => {
    const span = document.createElement("span");
    span.className = cell.cls;
    span.textContent = cell.text;
    row.append(span);
  });
  sheet.append(row);
}

addRow("colhead", "", columns.map((c) => ({ cls: "ch col" + c, text: c })));
addRow("short heads", "1", headings.map((text) => ({ cls: "c", text })));

for (let n = 2; n <= 48; n++) {
  const values = records[n - 2] || [];
  addRow(n === 2 ? "short" : "", String(n), columns.map((c, i) => {
    if (hasDashes(n) && (c === "R" || c === "S")) return { cls: "c dash", text: "-" };
    let cls = numeric.has(c) ? "c n" : "c";
    if (c === "X") cls += " clip";
    if (n === 6 && c === "O") cls += " flag";
    return { cls, text: values[i] || "" };
  }));
}
```

FILE: styles.css
```css
* { box-sizing: border-box; }
body { margin: 0; width: 3840px; height: 1080px; overflow: hidden; background: #fff; font-family: "Open Sans", "Noto Sans", sans-serif; font-size: 12px; letter-spacing: -0.25px; color: #444; }
.defs { position: absolute; width: 0; height: 0; }
.glyph { font-family: "Open Sans", sans-serif; letter-spacing: 0; }
svg { display: block; flex: none; overflow: visible; }
span, b, label { white-space: nowrap; }
button { font: inherit; letter-spacing: inherit; color: inherit; padding: 0; border-radius: 0; }
.dn { width: 8px; height: 8px; }
.desktop { display: flex; width: 3840px; height: 1080px; }

/* vertical taskbar */
.vbar { width: 62px; background: #655423; display: flex; flex-direction: column; flex: none; }
.v { height: 47px; display: flex; align-items: center; justify-content: center; }
.v svg, .h svg { width: 24px; height: 24px; }
.v.s40 { height: 40px; }
.v.s40 svg { width: 22px; height: 22px; }
.v.first { margin-top: 3px; }
.v.open { background: linear-gradient(#fdeeb0, #fdeeb0) 0 50% / 2px 38px no-repeat; }
.v.active { background: linear-gradient(#fdeeb0, #fdeeb0) 0 0 / 2px 100% no-repeat, linear-gradient(90deg, #9c7b26 57px, #59481a 57px, #59481a 59px, #7d6525 59px); }
.tray { margin-top: auto; display: flex; flex-direction: column; height: 172px; background: linear-gradient(#8f8463, #8f8463) 0 167px / 100% 1px no-repeat; }
.more { width: 8px; height: 13px; margin: 4px 0 0 41px; }
.trayrow { display: flex; gap: 8px; padding-left: 12px; height: 16px; margin-top: 9px; }
.trayrow svg { width: 17px; height: 16px; }
.trayrow + .trayrow { margin-top: 8px; }
.clock { color: #fff; text-align: center; line-height: 17.5px; margin-top: 14px; letter-spacing: -0.3px; }
.notif { width: 28px; height: 28px; margin: 17px 0 0 20px; }

/* spreadsheet */
.xl { width: 1858px; flex: none; display: flex; flex-direction: column; background: #e6e6e6; }
.xtitle { height: 35px; background: #217346; display: flex; justify-content: space-between; position: relative; }
.qat { display: flex; align-items: center; padding-left: 21px; height: 30px; }
.q1, .q2, .q4 { width: 15px; height: 15px; }
.q3, .q5, .q6 { width: 7px; height: 7px; }
.q2 { margin-left: 15px; } .q3 { margin-left: 5px; } .q4 { margin-left: 9px; } .q5 { margin-left: 5px; } .q6 { margin: 4px 0 0 13px; }
.xname { position: absolute; left: 874px; top: 9px; color: #a7cbb5; letter-spacing: -0.45px; }
.xwin { display: flex; gap: 32px; align-items: center; height: 30px; padding-right: 17px; }
.xwin svg { width: 14px; height: 14px; }
.xtabs { height: 24px; background: #217346; display: flex; color: #fff; line-height: 24px; }
.xtabs > span { text-align: center; }
.t-file { width: 58px; margin-left: 0; }
.t-home { width: 60px; margin-left: 5px; background: #f1f1f1; color: #217346; }
.t-ins { width: 58px; }
.t-page { width: 96px; } .t-form { width: 76px; } .t-data { width: 54px; } .t-rev { width: 66px; } .t-view { width: 52px; } .t-dev { width: 84px; } .t-pow { width: 90px; } .t-pdf { width: 106px; }
.bulb { width: 11px; height: 15px; margin: 4px 0 0 13px; }
.xtabs .tell { margin-left: 7px; color: #d6e8dd; letter-spacing: -0.32px; }
.signin { margin-left: auto; }
.xtabs .share { display: flex; align-items: center; gap: 3px; width: 63px; height: 23px; margin: 0 16px 0 11px; padding-left: 6px; background: #125a31; }
.share svg { width: 15px; height: 16px; }

.ribbon { height: 93px; background: #f1f1f1; border-bottom: 1px solid #d2d2d2; display: flex; position: relative; }
.grp { height: 92px; display: flex; flex-direction: column; flex: none; background: linear-gradient(#d2d2d2, #d2d2d2) 100% 3px / 1px 85px no-repeat; }
.glabel { margin-top: auto; height: 17px; margin-bottom: 0; text-align: center; line-height: 16px; color: #666; position: relative; }
.glabel svg { position: absolute; right: 5px; top: 4px; width: 8px; height: 8px; }
.gbody { display: flex; }
.g-clip { width: 158px; } .g-font { width: 207px; } .g-align { width: 264px; } .g-num { width: 140px; } .g-style { width: 689px; } .g-cells { width: 136px; } .g-edit { width: 187px; }
.big { display: flex; flex-direction: column; align-items: center; padding-top: 7px; line-height: 16px; text-align: center; }
.big > svg:first-child { width: 30px; height: 31px; }
.big > span { margin-top: 3px; }
.big > .dn { margin-top: 3px; }
.big span .dn { display: inline-block; margin-left: 2px; }
.paste { width: 50px; }
.stack { padding: 4px 0 0 0; }
.stack > div { display: flex; align-items: center; height: 23px; gap: 4px; white-space: nowrap; }
.stack svg { width: 15px; height: 15px; }
.stack svg.dn { width: 8px; height: 8px; margin-left: 5px; }
.clipstack { letter-spacing: -0.5px; }
.clipstack > div { gap: 3px; }
.g-edit .stack svg.dn { margin-left: 0; } .g-edit .stack svg.far { margin-left: 5px; }
.r1 { display: flex; height: 22px; margin: 11px 0 0 4px; }
.r2 { display: flex; align-items: center; height: 30px; margin: 4px 0 0 3px; }
.combo { height: 23px; background: #fff; border: 1px solid #ababab; display: flex; align-items: center; justify-content: space-between; padding: 0 3px; }
.combo + .combo { margin-left: -1px; }
.c111 { width: 112px; } .c43 { width: 44px; } .c130 { width: 131px; }
.grow { font-size: 15px; margin-left: 7px; line-height: 22px; } .shrink { font-size: 13px; margin-left: 8px; line-height: 24px; }
.r1 sup { font-size: 6px; color: #3c76b4; vertical-align: 8px; line-height: 0; }
.w22 { width: 22px; text-align: center; font-size: 13px; color: #444; }
.it { font-style: italic; } .un { text-decoration: underline; }
.vs { width: 1px; height: 24px; background: #d2d2d2; margin: 0 7px 0 7px; }
.r2 .dn { margin: 0 2px; }
.i16 { width: 16px; height: 16px; }
.r2 .i16 + .dn { margin-left: 4px; } .r2 .dn + .i16 { margin-left: 4px; }
.acols { display: flex; }
.agrid { display: grid; grid-template-columns: repeat(3, 22px); grid-template-rows: 22px 22px; row-gap: 9px; place-items: center; padding: 11px 0 0 4px; }
.al { width: 14px; height: 14px; }
.on { background: #c6c6c6; }
.agrid .on { width: 22px; height: 22px; display: grid; place-items: center; }
.vs2 { width: 1px; height: 53px; margin: 11px 0 0 4px; background: linear-gradient(#d2d2d2 21px, transparent 21px, transparent 31px, #d2d2d2 31px); }
.vs3 { width: 1px; height: 54px; margin: 10px 0 0 6px; background: #d9d9d9; }
.ogrid { display: grid; grid-template-columns: 22px 16px; grid-template-rows: 22px 22px; row-gap: 9px; align-items: center; padding: 11px 0 0 7px; }
.ogrid .dn { margin-left: 0; }
.wstack { padding: 11px 0 0 7px; display: grid; grid-template-rows: 22px 22px; row-gap: 9px; }
.wstack div { display: flex; align-items: center; gap: 4px; white-space: nowrap; }
.wstack .dn { margin-left: 5px; }
.num { color: #555; font-size: 16px; }
.money { margin-left: 7px; } .r2.num .dn { margin: 0 7px 0 8px; } .com { margin-left: 13px; font-size: 20px; line-height: 10px; } .num .vs { margin: 0 7px 0 12px; } .num .i16 + .i16 { margin-left: 6px; }
.cf { width: 84px; } .ft { width: 44px; white-space: nowrap; }
.gallery { margin: 6px 0 0 6px; width: 548px; height: 62px; border: 1px solid #ababab; background: #fff; display: flex; }
.cells { width: 532px; display: grid; grid-template-columns: repeat(5, 100px); column-gap: 6px; grid-template-rows: 22px 22px; row-gap: 6px; padding: 5px 0 0 3px; }
.cs { line-height: 22px; padding-left: 4px; font-size: 13px; letter-spacing: -0.3px; height: 22px; }
.normal { color: #000; outline: 3px solid #c6c6c6; }
.bad { background: #ffc7ce; color: #9c0006; } .good { background: #c6efce; color: #006100; } .neutral { background: #ffeb9c; color: #9c5700; }
.calc { background: #f2f2f2; color: #fa7d00; font-weight: 700; border: 1px solid #7f7f7f; line-height: 20px; letter-spacing: -0.6px; }
.check { background: #a5a5a5; color: #fff; font-weight: 700; border: 3px double #3f3f3f; line-height: 16px; padding-left: 2px; letter-spacing: -0.6px; }
.expl { color: #7f7f7f; font-style: italic; } .input { background: #ffcc99; color: #3f3f76; border: 1px solid #7f7f7f; line-height: 20px; }
.linked { color: #fa7d00; border-bottom: 3px double #ff8001; line-height: 20px; } .noted { background: #ffffcc; border: 1px solid #b2b2b2; color: #000; line-height: 20px; }
.gbar { width: 15px; border-left: 1px solid #ababab; display: flex; flex-direction: column; margin-left: auto; }
.gbar span { flex: 1; border-bottom: 1px solid #ababab; font-size: 6px; line-height: 20px; text-align: center; color: #666; }
.gbar .dim { background: #e3e3e3; color: #aaa; } .gbar .last { border: 0; background: linear-gradient(#777, #777) 50% 7px / 6px 1px no-repeat; line-height: 24px; }
.c1 { width: 42px; margin-left: 4px; } .c2 { width: 41px; } .c3 { width: 44px; }
.c3 > svg:first-child { width: 28px; } .c1 > svg:first-child { width: 27px; }
.g-edit .stack { width: 93px; padding-left: 7px; }
.e1 { width: 48px; } .e2 { width: 40px; }
.collapse { width: 9px; height: 9px; margin: 79px 0 0 59px; }

.fbar { height: 36px; display: flex; padding: 10px 5px 0 5px; flex: none; }
.fbar > span { height: 26px; line-height: 24px; }
.namebox { width: 102px; background: #fff; border: 1px solid #c6c6c6; padding: 0 6px; display: flex; justify-content: space-between; align-items: center; font-size: 13px; }
.dots { width: 30px; text-align: center; color: #999; }
.fxbox { width: 110px; background: #fff; border: 1px solid #c6c6c6; display: flex; align-items: center; justify-content: space-between; padding: 0 11px 0 12px; }
.fxbox svg { width: 12px; height: 12px; }
.fxbox em { font-family: "Liberation Serif", serif; font-size: 16px; font-weight: 700; color: #555; }
.fxbox small { font-size: 11px; }
.finput { flex: 1; margin-left: 3px; background: #fff; border: 1px solid #c6c6c6; padding: 0 3px 0 11px; display: flex; justify-content: space-between; align-items: center; font-size: 12.5px; letter-spacing: -0.15px; }
.finput svg { width: 9px; height: 9px; }

.xbody { flex: 1; display: flex; min-height: 0; }
.pane { width: 245px; flex: none; padding: 0 14px; display: flex; flex-direction: column; }
.pane h2 { margin: 21px 0 0; font-weight: 400; font-size: 20.5px; line-height: 32px; color: #217346; letter-spacing: -0.75px; white-space: nowrap; }
.pane p { margin: 4px 0 0; line-height: 13px; font-size: 11.5px; color: #555; white-space: nowrap; letter-spacing: -0.27px; }
.pane h3 { margin: 14px 0 0; font-size: 12px; line-height: 18px; font-weight: 600; border-bottom: 1px solid #bbb; height: 20px; }
.files { margin: 4px 0 0 9px; height: 634px; background: #fff; border: 1px solid #ababab; padding-top: 5px; }
.file { display: flex; gap: 9px; padding-left: 11px; line-height: 15px; color: #222; height: 70px; white-space: nowrap; overflow: hidden; }
.file svg { width: 17px; height: 17px; margin-top: 0; }
.which { margin-top: 55px; display: flex; align-items: center; gap: 6px; color: #33629b; line-height: 18px; white-space: nowrap; }
.qm { width: 16px; height: 16px; border-radius: 8px; background: #3c76b4; color: #fff; font-weight: 700; line-height: 16px; text-align: center; }
.pclose { margin: 5px 0 0 auto; width: 46px; height: 24px; border: 1px solid #ababab; background: #fdfdfd; }

.sheetcol { flex: 1; display: flex; flex-direction: column; padding-top: 10px; min-width: 0; }
.sheetrow { display: flex; height: 831px; border-bottom: 1px solid #999; }
.sheet { width: 1592px; font-family: "Lato", sans-serif; font-size: 12px; letter-spacing: -0.45px; color: #000; background: #fff; border-right: 1px solid #999; overflow: hidden; height: 830px; }
.srow { display: grid; grid-template-columns: 23px 151px 54px 54px 54px 128px 121px 121px 95px 114px 68px 100px 63px 105px 131px 75px 46px 54px 35px; height: 17px; line-height: 17px; }
.srow.short { height: 16px; line-height: 16px; }
.srow.colhead { height: 16px; line-height: 15px; background: #e6e6e6; border-bottom: 1px solid #999; font-size: 13px; }
.heads { font-weight: 700; letter-spacing: -0.55px; }
.rh { background: #e6e6e6; border-right: 1px solid #999; border-bottom: 1px solid #c3c3c3; text-align: center; font-size: 13px; font-weight: 400; letter-spacing: -0.3px; }
.colhead .rh { border-bottom: 0; background: linear-gradient(135deg, transparent 60%, #b5b5b5 60%) 10px 4px / 10px 10px no-repeat; border-color: #c3c3c3; }
.ch { text-align: center; border-right: 1px solid #bbb; color: #222; }
.c { border-right: 1px solid #d4d4d4; border-bottom: 1px solid #d4d4d4; padding-left: 2px; overflow: hidden; min-width: 0; }
.n { text-align: right; padding-right: 2px; }
.heads .c:last-child { padding-left: 3px; }
.clip { text-align: left; padding: 0 0 0 20px; }
.colX { text-align: right; padding-right: 4px; }
.dash { text-align: right; padding-right: 19px; }
.flag { background: linear-gradient(135deg, #0a7d28 3.5px, transparent 3.5px) no-repeat; }
.vscroll { flex: 1; display: flex; flex-direction: column; padding: 1px 3px 0 3px; }
.sb { width: 15px; height: 15px; background: #fff; border: 1px solid #ababab; font-size: 7px; line-height: 13px; text-align: center; color: #666; letter-spacing: 0; flex: none; }
.vthumb { height: 782px; margin-top: 1px; background: #fff; border: 1px solid #ababab; }
.vtrack { flex: 1; background: #dadada; }
.stabs { height: 27px; display: flex; font-size: 13px; line-height: 26px; letter-spacing: -0.35px; }
.nav { font-size: 7px; color: #bbb; width: 8px; margin-left: 26px; } .n2 { margin-left: 21px; }
.readme { margin: 4px 0 4px 37px; border-left: 1px solid #999; width: 81px; line-height: 19px; text-align: center; }
.current { width: 85px; background: #fff; color: #217346; font-weight: 700; text-align: center; border-bottom: 2px solid #217346; border-left: 1px solid #aaa; border-right: 1px solid #aaa; line-height: 26px; height: 25px; margin-top: -1px; letter-spacing: -0.55px; }
.dvs { width: 157px; padding-left: 15px; border-right: 1px solid #aaa; height: 23px; }
.plus { width: 15px; height: 15px; margin: 5px 0 0 33px; }
.hd { margin-left: auto; width: 10px; }
.hscroll { display: flex; width: 607px; margin: 7px 21px 0 11px; height: 15px; background: #dadada; }
.hthumb { width: 161px; margin: 0 auto 0 139px; background: #fff; border: 1px solid #ababab; }
.status { height: 23px; flex: none; background: #f1f1f1; border-top: 1px solid #c6c6c6; border-bottom: 1px solid #888; display: flex; align-items: center; padding-left: 7px; line-height: 21px; }
.rec { width: 14px; height: 14px; margin-left: 18px; }
.vw { width: 38px; height: 21px; display: grid; place-items: center; }
.rec + .vw { margin-left: auto; }
.vw svg { width: 14px; height: 14px; }
.slider { width: 124px; height: 14px; margin-left: 5px; }
.zoomv { margin: 0 6px 0 14px; letter-spacing: -0.6px; width: 23px; }

/* browser */
.right { width: 1920px; position: relative; display: flex; flex-direction: column; }
.iebar { height: 54px; display: flex; padding-top: 19px; flex: none; }
.back { width: 70px; height: 36px; overflow: hidden; flex: none; }
.addr { margin: 8px 0 0 1px; width: 1281px; height: 24px; border: 1px solid #b5b5b5; display: flex; align-items: center; padding: 0 4px; color: #777; flex: none; }
.addr svg { width: 16px; height: 16px; }
.url { margin-left: 5px; letter-spacing: -0.26px; }
.url b { font-weight: 400; color: #000; }
.addr .aic { width: 46px; height: 14px; margin-left: auto; }
.srch { margin: 8px 0 0 6px; width: 462px; height: 24px; border: 1px solid #b5b5b5; display: flex; align-items: center; justify-content: space-between; padding: 0 6px; color: #333; flex: none; }
.srch svg { width: 26px; height: 14px; }
.iectl { margin: -19px 0 0 -20px; width: 120px; flex: none; }
.wc { width: 120px; height: 12px; margin: 9px 0 0; }
.tools { width: 88px; height: 16px; margin: 10px 0 0 24px; }
.ietabs { height: 23px; display: flex; background: linear-gradient(#fff, #ebebeb); flex: none; }
.ietab { width: 199px; background: #fff; border: 1px solid #b5b5b5; border-bottom: 0; display: flex; align-items: center; gap: 5px; padding: 0 4px; color: #222; line-height: 22px; }
.ietab svg { width: 16px; height: 16px; }
.ietab b { margin-left: auto; color: #888; font-size: 15px; }
.newtab { width: 23px; background: #e3e3e3; border: 1px solid #b5b5b5; border-left: 0; border-bottom: 0; display: grid; place-items: center; }
.newtab svg { width: 16px; height: 16px; }
.ihead { height: 51px; display: flex; align-items: center; flex: none; }
.burger { width: 30px; height: 30px; margin: 3px 0 0 16px; background: #ec8f00; border-radius: 2px; display: flex; flex-direction: column; align-items: center; justify-content: center; gap: 2px; }
.burger i { width: 14px; height: 3px; background: #fff; }
.logo { width: 38px; height: 38px; margin-left: 21.5px; }
.brand { font: italic 700 25px "Liberation Serif", serif; color: #58595b; letter-spacing: 0.4px; margin-left: 9px; }
.user { margin: 12px 0 0 auto; font: 13px "Liberation Sans", sans-serif; letter-spacing: -0.45px; color: #555; display: flex; align-items: center; white-space: pre; }
.user b { letter-spacing: -0.58px; }
.user .dn { margin-left: 2px; }
.bell { width: 30px; height: 26px; margin: 2px 25px 0 16px; }
.imain { flex: 1; display: flex; min-height: 0; }
.side { width: 60px; background: #58585a; flex: none; padding-top: 16px; display: flex; flex-direction: column; align-items: center; gap: 29.6px; }
.side svg { width: 32px; height: 32px; }
.content { flex: 1; font-family: "DejaVu Sans Condensed", "DejaVu Sans", sans-serif; font-stretch: condensed; font-size: 12px; color: #333; letter-spacing: 0.08px; min-width: 0; }
.band { height: 40px; background: #f8f8f8; padding: 6px 0 0 5px; }
.ptab { width: 190px; height: 34px; background: #fff; border-radius: 6px 6px 0 0; display: flex; align-items: center; font: 600 13px "Open Sans", sans-serif; letter-spacing: -0.55px; color: #555; padding-left: 10px; }
.pie { width: 20px; height: 19px; margin-right: 7px; }
.pin { width: 16px; height: 16px; margin-left: 62px; } .px { width: 10px; height: 10px; margin: -14px 0 0 5px; }
.myp, .help { margin: 15px 10px 0 10px; height: 27px; border-bottom: 1px solid #939598; font-size: 14px; line-height: 24px; letter-spacing: 0; color: #444; }
.links { list-style: none; margin: 0; padding: 0 0 0 29px; color: #000; }
.links li { height: 20.6px; line-height: 16px; text-decoration: underline; text-underline-offset: 2px; position: relative; }
.links li::before { content: ""; position: absolute; left: -16px; top: 5px; width: 9px; height: 9px; border-radius: 50%; background: radial-gradient(circle at 35% 35%, #d98a8a, #a32424 60%, #6b1515); }
.links .off { color: #777; }
.l1 { height: 227px; }
.bills { margin: 0 0 0 5px; width: 1832px; }
.btitle { height: 25px; background: #60221f; color: #fff; font-weight: 700; font-size: 11.5px; letter-spacing: -0.05px; line-height: 26px; padding: 0 11px 0 5px; display: flex; justify-content: space-between; align-items: center; }
.btitle svg { width: 15px; height: 15px; margin-bottom: 4px; }
.bhead { height: 25px; background: #e8e6d8; border: 1px solid #c5c3b3; border-width: 2px 0 2px 1px; border-top-color: #dddbcc; display: grid; grid-template-columns: 1405px 182px 226px 1fr; line-height: 23px; }
.bhead span { padding-left: 5px; } .bhead em { font-style: normal; border-right: 1px solid #c5c3b3; padding-left: 5px; }
.bhead b { font-weight: 400; text-align: right; padding-right: 21px; border-right: 1px solid #c5c3b3; }
.bwrap { display: flex; }
.brows { width: 1815px; background: #fcfcfc; }
.brows div { height: 25px; border-bottom: 1px solid #ddd6c4; display: flex; justify-content: space-between; line-height: 28px; padding: 0 5px; }
.brows span + span { letter-spacing: -0.05px; }
.bscroll { flex: 1; background: #f0f0f0; display: flex; flex-direction: column; align-items: center; padding: 17px 1px; }
.bscroll svg { width: 11px; height: 9px; }
.bscroll i { width: 100%; height: 24px; background: #cdcdcd; margin: 8px 0 auto; }
.help { margin-top: 25px; height: 24px; display: flex; align-items: center; gap: 5px; }
.inf { width: 11px; height: 12px; border-radius: 6px; background: #333; color: #fff; font-size: 9px; line-height: 12px; text-align: center; }
.hbar { height: 40px; background: #655423; display: flex; padding-left: 0; flex: none; }
.h { width: 49px; display: flex; align-items: center; justify-content: center; }
.h.open { background: linear-gradient(#fdeeb0, #fdeeb0) 50% 100% / 40px 2px no-repeat; }
.h.active { background: linear-gradient(#fdeeb0, #fdeeb0) 0 100% / 49px 2px no-repeat, linear-gradient(90deg, #9c7b26 44px, #59481a 44px, #59481a 45px, #7d6525 45px); }
.hclock { margin: 2px 6px 0 auto; line-height: 18px; }

/* popup */
.dialog { position: absolute; left: 251px; top: 89px; width: 1226px; height: 825px; border: 1px solid #f0c53c; background: #fff; box-shadow: 0 4px 16px rgba(0,0,0,.4); display: flex; flex-direction: column; font-family: "DejaVu Sans Condensed", "DejaVu Sans", sans-serif; font-stretch: condensed; font-size: 12px; letter-spacing: 0.1px; color: #222; }
.dtitle { height: 30px; background: #f8c222; display: flex; align-items: center; font: 12px "Open Sans", sans-serif; letter-spacing: -0.27px; color: #111; }
.die { width: 16px; height: 16px; margin: 0 5px 0 9px; }
.dctl { width: 104px; height: 12px; margin: 0 16px 0 auto; }
.dhead { height: 59px; background: #60221f; color: #fff; display: flex; flex-direction: column; padding: 7px 5px; line-height: 16px; gap: 7px; }
.dhead b { letter-spacing: -0.1px; }
.dopt { margin-top: 7px; width: 250px; height: 18px; background: #60221f; color: #fff; display: flex; justify-content: space-between; padding: 0 5px 0 15px; line-height: 17px; }
.dopt b { font-size: 16px; line-height: 15px; }
.dbox { height: 226px; border: 1px solid #4682b4; padding-left: 12px; display: flex; flex-direction: column; flex: none; }
.q { display: grid; grid-template-columns: 868px 195px 1fr; line-height: 16px; padding-top: 4px; flex: none; }
.q label { display: flex; gap: 4px; padding-top: 0; letter-spacing: -0.1px; }
.q i { width: 13px; height: 13px; border: 1px solid #666; border-radius: 50%; margin-top: -2px; }
.q i.on { background: radial-gradient(circle, #222 3.2px, #fff 3.8px); }
.q i.full { background: #222; outline: 1px dotted #222; }
.h23 { height: 24px; } .h24 { height: 24px; } .h25 { height: 25px; } .h25b { height: 24px; } .h26 { height: 35px; } .soft { color: #555; }
.sel { height: 37px; }
.select { width: 330px; height: 23px; margin-top: 2px; border: 1px solid #999; background: #ececec; color: #666; display: flex; align-items: center; justify-content: space-between; padding: 0 8px; }
.select svg { width: 12px; height: 9px; }
.last.q { height: 29px; }
.next { width: 61px; height: 23px; margin: 0 0 0 auto; border: 1px solid #999; background: #ddd; letter-spacing: 0; }
.dspace { flex: 1; display: flex; align-items: flex-end; justify-content: flex-end; }
.dclose { width: 100px; height: 24px; border: 1px solid #999; background: #ddd; letter-spacing: -0.1px; }
.dstat { height: 23px; background: #f0f0f0; border-top: 1px solid #d4d4d4; display: flex; align-items: center; justify-content: flex-end; font: 12px "Open Sans", sans-serif; letter-spacing: -0.3px; color: #000; position: relative; padding-right: 22px; }
.mag { width: 13px; height: 14px; margin-right: 3px; } .zdn { width: 8px; height: 8px; margin-left: 15px; }
.grip { position: absolute; right: 1px; bottom: 2px; width: 9px; height: 9px; }
```
